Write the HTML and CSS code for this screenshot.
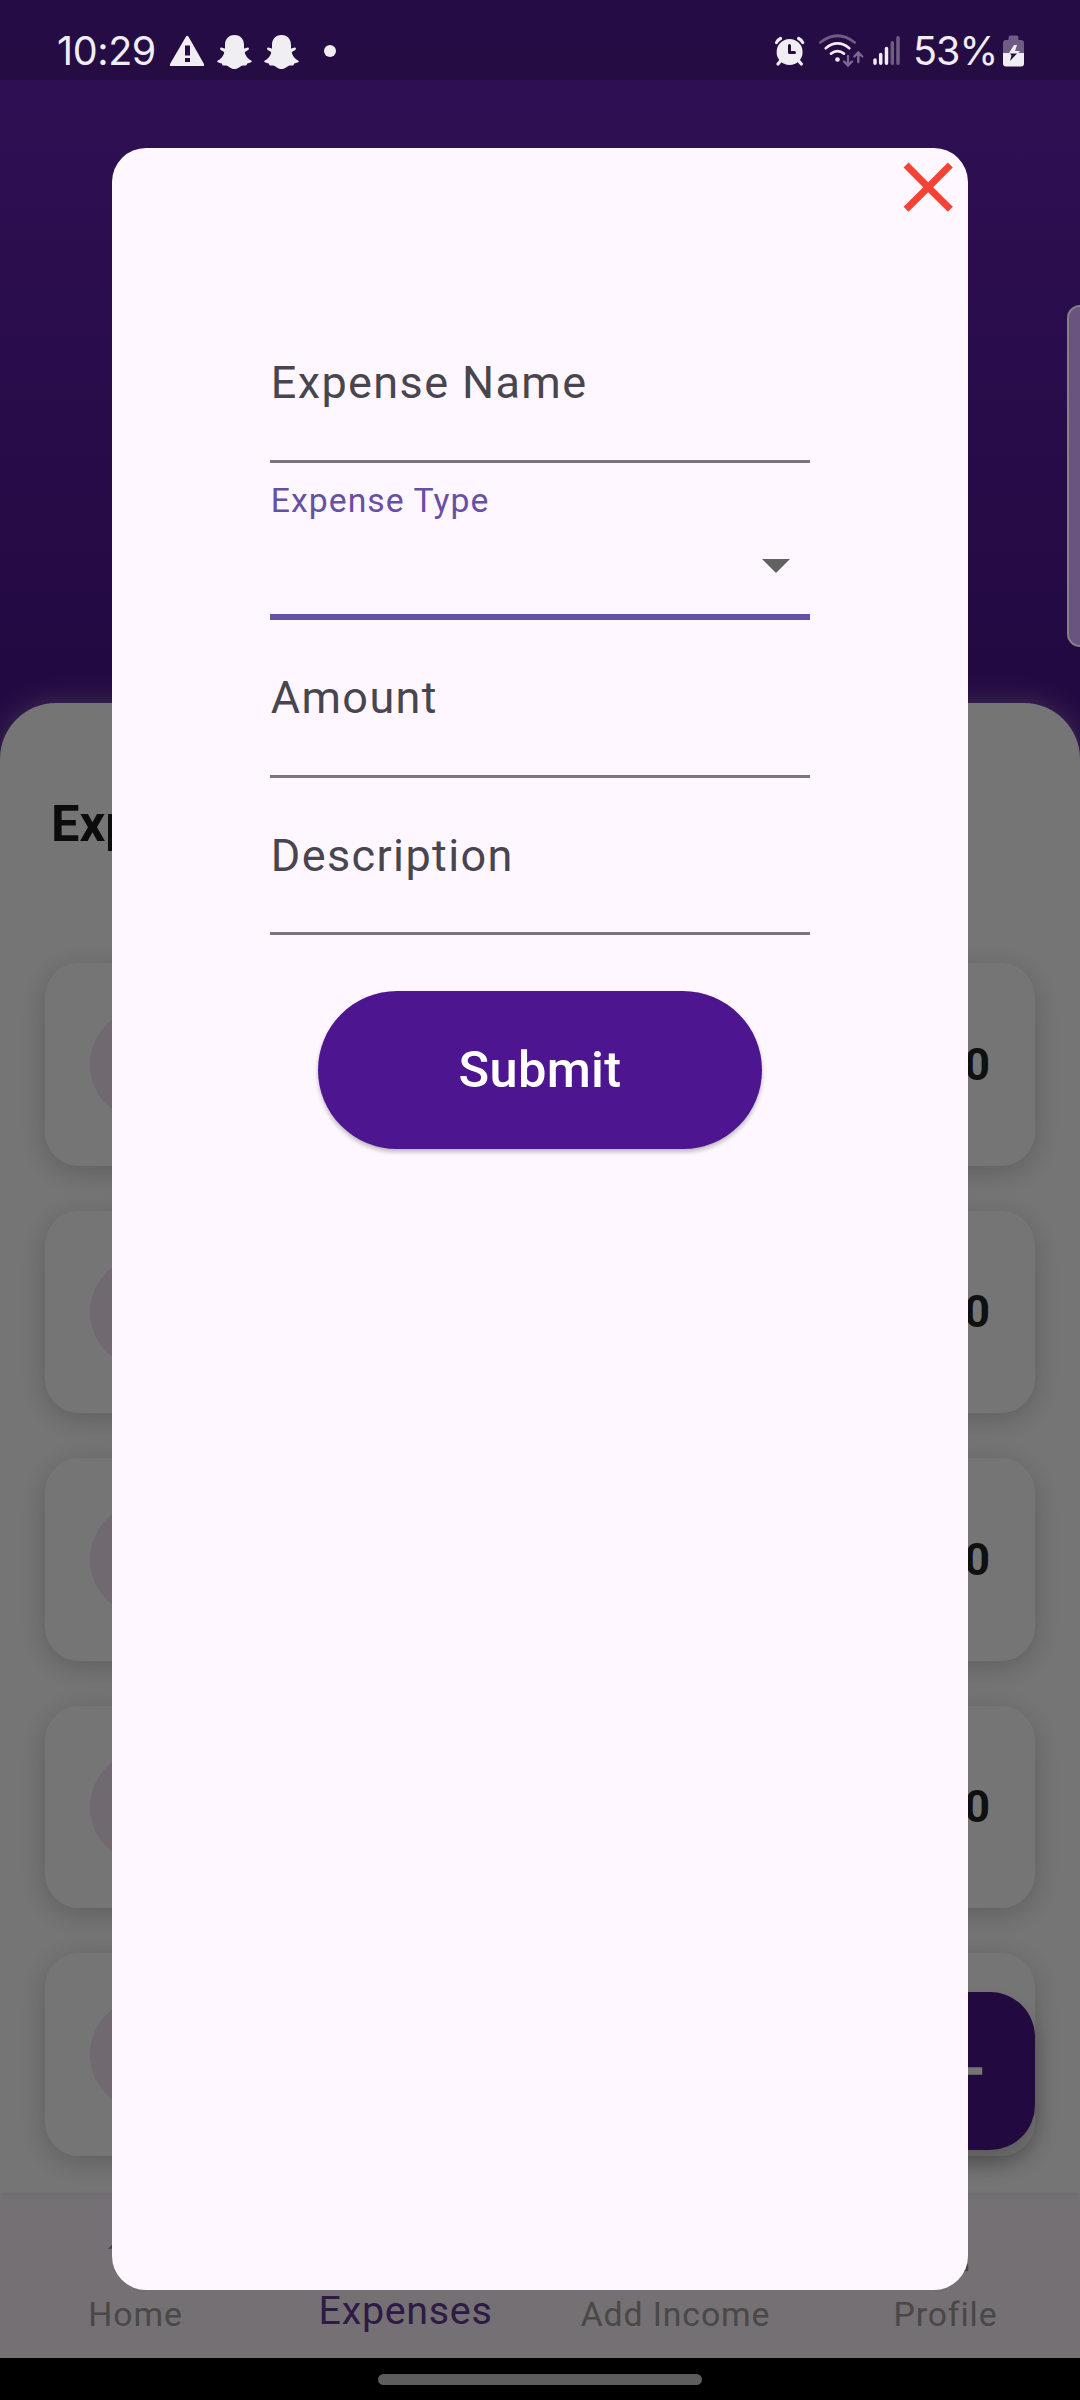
FILE: index.html
```html
<!DOCTYPE html>
<html lang="en">
<head>
<meta charset="utf-8">
<title>Expenses</title>
<link rel="stylesheet" href="styles.css">
</head>
<body>
<div class="screen">
  <div class="app">
    <header class="hero"></header>
    <main class="sheet">
      <h1 class="sheet-title">Expenses</h1>
      <div class="cards">
        <div class="card"><span class="avatar"></span><span class="amount">0</span></div>
        <div class="card"><span class="avatar"></span><span class="amount">0</span></div>
        <div class="card"><span class="avatar"></span><span class="amount">0</span></div>
        <div class="card"><span class="avatar"></span><span class="amount">0</span></div>
        <div class="card"><span class="avatar"></span></div>
      </div>
    </main>
    <nav class="nav">
      <div class="nav-item">
        <svg class="nav-icon" viewBox="0 0 24 24"><path d="M10 20v-6h4v6h5v-8h3L12 3 2 12h3v8z"/></svg>
        <span>Home</span>
      </div>
      <div class="nav-item active"><span>Expenses</span></div>
      <div class="nav-item"><span>Add Income</span></div>
      <div class="nav-item">
        <svg class="nav-icon" viewBox="0 0 24 24"><path d="M12 12c2.210 0 4-1.790 4-4s-1.790-4-4-4-4 1.790-4 4 1.790 4 4 4zm0 2c-2.670 0-8 1.340-8 4v2h16v-2c0-2.660-5.330-4-8-4z"/></svg>
        <span>Profile</span>
      </div>
    </nav>
    <div class="fab"><svg viewBox="0 0 24 24"><path d="M19 13h-6v6h-2v-6H5v-2h6V5h2v6h6z"/></svg></div>
  </div>

  <div class="scrim"></div>
  <div class="edge-handle"></div>

  <div class="status">
    <span class="time">10:29</span>
    <svg width="34" height="80" viewBox="170 0 34 80"><path fill="#f0edf3" fill-rule="evenodd" d="M186 36.500q1.200-1.600 2.400 0L204 64v2h-34v-2zM185 45.500h5v10h-5zM185 58h5v4h-5z"/></svg>
    <svg class="ghost" width="35" height="80" viewBox="217 0 35 80"><path d="M234.500 35c6.500 0 9.700 4.700 9.500 10.500v3c1.500.3 3-1.500 4.500-.7 1.200 1.200-.3 2.600-2 3.200-1.800.8-2 1.400-1.300 3 1.400 3.200 3.300 5.300 6.300 6.700 1.200 1-1 2.200-4.300 2.700-.6 2-1 2.200-4.200 2-2.400.1-4.500 3.600-8.500 3.600s-6.100-3.500-8.500-3.600c-3.200.2-3.600 0-4.200-2-3.300-.5-5.500-1.700-4.300-2.700 3-1.400 4.900-3.500 6.300-6.700.7-1.600.5-2.200-1.300-3-1.700-.6-3.200-2-2-3.200 1.500-.8 3 1 4.500.7v-3C224.800 39.700 228 35 234.500 35z"/></svg>
    <svg class="ghost second" width="35" height="80" viewBox="217 0 35 80"><path d="M234.500 35c6.500 0 9.700 4.700 9.500 10.500v3c1.500.3 3-1.500 4.500-.7 1.200 1.200-.3 2.600-2 3.200-1.800.8-2 1.400-1.300 3 1.400 3.200 3.300 5.300 6.300 6.700 1.200 1-1 2.200-4.300 2.700-.6 2-1 2.200-4.200 2-2.400.1-4.500 3.600-8.500 3.600s-6.100-3.500-8.500-3.600c-3.200.2-3.600 0-4.200-2-3.300-.5-5.500-1.700-4.300-2.700 3-1.400 4.900-3.500 6.300-6.700.7-1.600.5-2.200-1.300-3-1.700-.6-3.200-2-2-3.200 1.500-.8 3 1 4.500.7v-3C224.800 39.700 228 35 234.500 35z"/></svg>
    <svg class="dot" width="12" height="80" viewBox="0 0 12 80"><circle cx="6" cy="51" r="6" fill="#f0edf3"/></svg>

    <svg class="alarm" width="30" height="80" viewBox="775 0 30 80">
      <circle cx="789.600" cy="52" r="13" fill="#f0edf3"/>
      <path d="M776.500 42.500q1-2.500 4-4M802.700 42.500q-1-2.500-4-4M780.500 61l-2.500 3M798.800 61l2.500 3" stroke="#f0edf3" stroke-width="3.200" stroke-linecap="round" fill="none"/>
      <path d="M789.500 45.500v7h5" stroke="#250c40" stroke-width="3" stroke-linecap="round" stroke-linejoin="round" fill="none"/>
    </svg>
    <svg class="wifi" width="46" height="80" viewBox="818 0 46 80" fill="none" stroke-linecap="round" stroke-width="2.700">
      <path d="M820.300 42.500q17.200-13.500 34.400 0" stroke="#6f5c84"/>
      <path d="M825.700 48.200q11.800-9.500 23.600 0M831 53.600q6.500-4.800 13 0" stroke="#f0edf3"/>
      <circle cx="837.500" cy="59.500" r="2.300" fill="#f0edf3"/>
      <path d="M848 56v9m-4-3.500 4 4 4-4M858.300 62v-9m-4 3.500 4-4 4 4" stroke="#7c6a90" stroke-width="2.400"/>
    </svg>
    <svg class="signal" width="28" height="80" viewBox="873 0 28 80" fill="none" stroke-linecap="round" stroke-width="3.500">
      <path d="M875 60v3.300M880.700 54.500v8.800M886.500 48.500v14.800" stroke="#f0edf3"/>
      <path d="M892.300 42.700v20.600M898 37.700v25.600" stroke="#6f5c84"/>
    </svg>
    <span class="percent">53%</span>
    <svg class="battery" width="21" height="80" viewBox="1003 0 21 80">
      <path d="M1008.500 37.500q0-2 2-2h6q2 0 2 2v2.500h2.500q3 0 3 3v10.500h-21V43q0-3 3-3h2.500z" fill="#6f5c84"/>
      <path d="M1003 53h21v10.500q0 3-3 3h-15q-3 0-3-3z" fill="#f0edf3"/>
      <path d="M1014 45h3l-2 6h5l-2.500 3h-9z" fill="#f0edf3"/>
      <path d="M1010 53.500h7l-7 7.500 1.500-5.500z" fill="#250c40"/>
    </svg>
  </div>

  <section class="dialog">
    <svg class="close" viewBox="0 0 24 24"><path d="M19 6.410 17.590 5 12 10.590 6.410 5 5 6.410 10.590 12 5 17.590 6.410 19 12 13.410 17.590 19 19 17.590 13.410 12z"/></svg>
    <form class="form">
      <div class="field"><label>Expense Name</label></div>
      <div class="field focused"><label>Expense Type</label><svg class="caret" viewBox="0 0 10 5"><path d="M0 0h10L5 5z"/></svg></div>
      <div class="field"><label>Amount</label></div>
      <div class="field"><label>Description</label></div>
      <button class="submit" type="button">Submit</button>
    </form>
  </section>

  <div class="gesture"><span></span></div>
</div>
</body>
</html>
```
FILE: styles.css
```css
* { box-sizing: border-box; }

body {
  margin: 0;
  background: #000;
  font-family: Roboto, "Liberation Sans", sans-serif;
}

.screen {
  position: relative;
  width: 1080px;
  height: 2400px;
  overflow: hidden;
}

.app {
  position: relative;
  display: flex;
  flex-direction: column;
  height: 2357.5px;
  background: linear-gradient(#6a24bc 0, #4c148e 700px);
}

.hero { flex: 0 0 703px; }

.sheet {
  flex: 1;
  min-height: 0;
  padding: 0 45px;
  background: #fff;
  border-radius: 56px 56px 0 0;
  box-shadow: 0 0 28px rgba(255, 255, 255, .38);
}

.sheet-title {
  height: 260px;
  margin: 0;
  padding: 91px 0 0 6px;
  font-size: 50.6px;
  line-height: 59px;
  font-weight: 700;
  color: #1c1c1e;
}

.cards {
  display: flex;
  flex-direction: column;
  gap: 45px;
}

.card {
  display: flex;
  align-items: center;
  justify-content: space-between;
  height: 202.5px;
  padding: 0 45px;
  border-radius: 34px;
  background: #fff;
  box-shadow: 0 6px 28px rgba(0, 0, 0, .2);
}

.avatar {
  width: 112.5px;
  height: 112.5px;
  border-radius: 50%;
  background: #f3e5f5;
}

.amount {
  font-size: 45px;
  font-weight: 700;
  color: #242424;
}

.nav {
  position: relative;
  display: flex;
  flex: 0 0 162.5px;
  background: #fff3fb;
  box-shadow: 0 -1px 3px rgba(0, 0, 0, .15);
}

.nav-item {
  flex: 1;
  display: flex;
  flex-direction: column;
  align-items: center;
  justify-content: flex-end;
  padding: 0 0 23px 1px;
  color: #9e9e9e;
  font-size: 33.75px;
  line-height: 40px;
  letter-spacing: .9px;
}

.nav-item.active {
  padding-bottom: 27px;
  color: #623c98;
  font-size: 39.4px;
  letter-spacing: .7px;
}

.nav-icon {
  width: 67.5px;
  height: 67.5px;
  margin-bottom: 12.5px;
  fill: #9e9e9e;
}

.fab {
  position: absolute;
  left: 877.5px;
  top: 1992.3px;
  display: flex;
  align-items: center;
  justify-content: center;
  width: 157.5px;
  height: 157.5px;
  border-radius: 45px;
  background: #4a148c;
  box-shadow: 0 12px 20px rgba(0, 0, 0, .22);
}

.fab svg {
  width: 90px;
  height: 90px;
  fill: #fff;
}

.scrim {
  position: absolute;
  inset: 0;
  background: rgba(0, 0, 0, .54);
}

.edge-handle {
  position: absolute;
  left: 1067px;
  top: 305px;
  width: 30px;
  height: 342px;
  border: 2px solid #85808a;
  border-radius: 13px;
  background: #68547f;
}

.status {
  position: absolute;
  inset: 0 0 auto;
  display: flex;
  height: 80px;
  padding-left: 57px;
  background: rgba(0, 0, 0, .2);
  color: #f0edf3;
  font-family: Inter, sans-serif;
  font-size: 39.5px;
  line-height: 102px;
  white-space: nowrap;
}

.status svg { flex: none; }

.time {
  flex: 0 0 113px;
  letter-spacing: -.4px;
}

.ghost {
  margin-left: 13px;
  fill: #f0edf3;
}

.ghost.second { margin-left: 12px; }
.dot { margin-left: 25px; }
.alarm { margin-left: 439px; }
.wifi { margin-left: 13px; }
.signal { margin-left: 9px; }

.percent {
  flex: 0 0 90px;
  margin-left: 12px;
  letter-spacing: -1px;
}

.dialog {
  position: absolute;
  left: 112.4px;
  top: 147.5px;
  display: flex;
  flex-direction: column;
  width: 855.2px;
  height: 2142.5px;
  border-radius: 34px;
  background: #fef7ff;
}

.close {
  align-self: flex-end;
  width: 84.4px;
  height: 84.4px;
  margin: -2.8px -2.8px 0 0;
  fill: #f44336;
}

.form {
  display: flex;
  flex-direction: column;
  width: 540px;
  margin: 76px 0 0 157.6px;
}

.field {
  position: relative;
  height: 157.5px;
  padding: 51px 0 0 .8px;
  border-bottom: 3px solid #7c757e;
  color: #49454f;
  font-size: 45px;
  line-height: 53px;
  letter-spacing: 1.38px;
}

.field label { display: block; }

.field.focused {
  display: flex;
  justify-content: space-between;
  padding-top: 18px;
  border-bottom: 6px solid #6750a4;
  color: #6750a4;
  font-size: 33.75px;
  line-height: 40px;
  letter-spacing: 1.03px;
}

.caret {
  width: 28px;
  height: 14px;
  margin: 78px 20px 0 0;
  fill: #616161;
}

.submit {
  align-self: center;
  width: 444px;
  height: 157.5px;
  margin-top: 56px;
  padding: 0;
  border: 0;
  border-radius: 79px;
  background: #4d158f;
  box-shadow: 0 3px 4px rgba(0, 0, 0, .25);
  color: #fff;
  font: 500 50.6px/59px Roboto, "Liberation Sans", sans-serif;
  letter-spacing: .3px;
}

.gesture {
  position: absolute;
  inset: auto 0 0;
  display: flex;
  justify-content: center;
  height: 42.5px;
  padding-top: 16.5px;
  background: #000;
}

.gesture span {
  width: 324px;
  height: 11px;
  border-radius: 6px;
  background: #5d5d5d;
}
```
